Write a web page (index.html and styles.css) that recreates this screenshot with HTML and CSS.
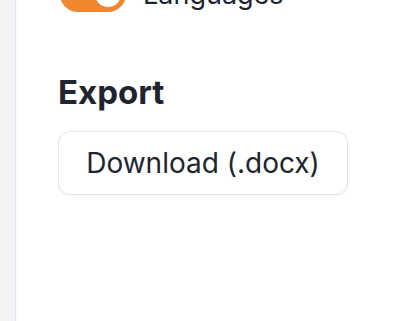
FILE: index.html
```html
<!DOCTYPE html>
<html lang="en">
<head>
    <meta charset="UTF-8">
    <meta name="viewport" content="width=device-width, initial-scale=1.0">
    <title>Settings</title>
    <link rel="stylesheet" href="styles.css">
</head>
<body>
    <div class="layout">
        <aside class="sidebar"></aside>
        <main class="content">
            <!-- Language toggle -->
            <div class="setting-row">
                <span class="toggle on"><span class="knob"></span></span>
                <span class="setting-label">Languages</span>
            </div>
            <!-- Export -->
            <section class="section">
                <h2 class="section-title">Export</h2>
                <button class="button">Download (.docx)</button>
            </section>
        </main>
    </div>
</body>
</html>
```

FILE: styles.css
```css
body {
    margin: 0;
    background-color: #ffffff;
    font-family: 'Inter', 'Noto Sans', sans-serif;
    color: #1f2530;
    overflow: hidden;
}
.layout {
    display: flex;
    height: 321px;
}
.sidebar {
    width: 15px;
    flex-shrink: 0;
    background-color: #f3f4f6;
    border-right: 1px solid #e4e6ea;
    box-shadow: 1px 0 2px rgba(0, 0, 0, 0.04);
}
.content {
    flex: 1;
    padding-left: 42px;
}
.setting-row {
    display: flex;
    align-items: center;
    gap: 17px;
    margin-top: -24px;
    margin-left: 2px;
    height: 36px;
}
.toggle {
    position: relative;
    width: 66px;
    height: 36px;
    border-radius: 18px;
    background-color: #f0862f;
    flex-shrink: 0;
}
.toggle .knob {
    position: absolute;
    top: 5px;
    right: 5px;
    width: 26px;
    height: 26px;
    border-radius: 50%;
    background-color: #ffffff;
}
.setting-label {
    font-size: 27px;
    line-height: 1;
    color: #1f2530;
}
.section {
    margin-top: 61px;
}
.section-title {
    margin: 0;
    font-size: 33px;
    line-height: 39px;
    font-weight: 700;
    color: #1f2530;
}
.button {
    margin-top: 19px;
    width: 290px;
    height: 64px;
    padding: 0;
    font-family: inherit;
    font-size: 28px;
    color: #1f2530;
    background-color: #ffffff;
    border: 1px solid #e3e5e9;
    border-radius: 12px;
    box-shadow: 0 1px 3px rgba(0, 0, 0, 0.05);
    cursor: pointer;
}
```
